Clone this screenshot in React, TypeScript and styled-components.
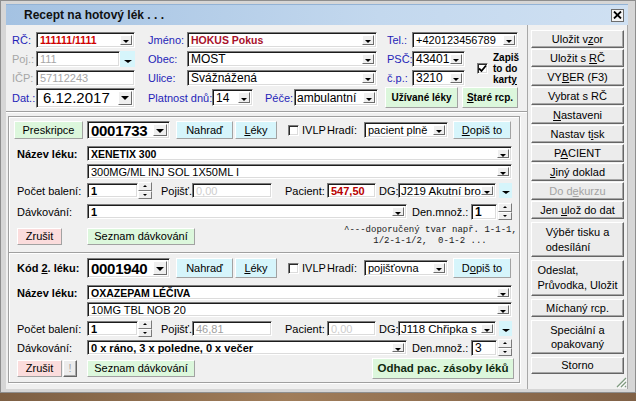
import React from 'react';
import styled, { createGlobalStyle } from 'styled-components';

const GlobalStyle = createGlobalStyle`
  html, body { margin: 0; padding: 0; background: #8b6c4e; }
  body { font-family: "Liberation Sans", Arial, sans-serif; font-size: 11px; color: #000; }
  * { box-sizing: border-box; }
`;

type Tone = 'plain' | 'green' | 'cyan' | 'pink';
type LabelTone = 'blue' | 'gray' | 'black';

const toneBg: Record<Tone, string> = {
  plain: '#ececec',
  green: '#dcf7dc',
  cyan: '#d6f5fb',
  pink: '#fbdcdc',
};

const labelColor: Record<LabelTone, string> = {
  blue: '#1f1fb8',
  gray: '#a6a6a6',
  black: '#000',
};

const Desktop = styled.div`
  width: 636px;
  height: 401px;
  overflow: hidden;
  background: linear-gradient(to right, #7d5f43, #a07d5a 45%, #806146);
`;

const Window = styled.div`
  width: 636px;
  height: 393px;
  display: flex;
  flex-direction: column;
  padding: 3px 7px 3px 5px;
  background: #d6d6d6;
  border: 1px solid #8e8e8e;
`;

const TitleBar = styled.div`
  height: 21px;
  flex: none;
  display: flex;
  align-items: center;
  padding: 0 4px 0 18px;
  background: linear-gradient(to right, #a4c2e2, #c3d8ee 60%, #cfe0f2);
  border-top: 1px solid #93b3d6;
`;

const Title = styled.span`
  flex: 1;
  font-size: 12px;
  font-weight: bold;
  color: #111;
`;

const CloseBox = styled.span`
  width: 13px;
  height: 13px;
  display: flex;
  align-items: center;
  justify-content: center;
  background: #f4f4f4;
  border: 1px solid #6d6d6d;
`;

const Client = styled.div`
  flex: 1;
  display: flex;
  background: #f0f0f0;
`;

const LeftPane = styled.div`
  width: 521px;
  display: flex;
  flex-direction: column;
`;

const RightPane = styled.div`
  width: 101px;
  display: flex;
  flex-direction: column;
  padding: 5px 3px 0;
  border-left: 1px solid #a8a8a8;
  border-right: 1px solid #a8a8a8;
`;

const BtnStack = styled.div<{ $gap: number; $mt?: number }>`
  display: flex;
  flex-direction: column;
  gap: ${p => p.$gap}px;
  margin-top: ${p => p.$mt ?? 0}px;
`;

const Header = styled.div`
  padding: 7px 0 0 6px;
`;

const HeaderGrid = styled.div`
  display: grid;
  grid-template-columns: 24px 99px 52px 190px 35px 53px 53px;
  grid-template-rows: 16px 16px 16px;
  row-gap: 3px;
  align-items: center;
`;

const HeaderRow = styled.div`
  display: flex;
  align-items: center;
  height: 21px;
  margin-top: 1px;
`;

const HeadField = styled.div`
  display: flex;
  align-items: center;
`;

const Rule = styled.div<{ $mt: number; $bleed?: number }>`
  height: 2px;
  flex: none;
  margin: ${p => p.$mt}px -${p => p.$bleed ?? 0}px 0;
  border-top: 1px solid #a0a0a0;
  border-bottom: 1px solid #fff;
`;

const DrugFrame = styled.div`
  width: 512px;
  height: 267px;
  margin: 3px 0 0 2px;
  padding: 4px 5px 0;
  border: 1px solid #a0a0a0;
  box-shadow: inset 1px 1px 0 #fff, 1px 1px 0 #fff;
  display: flex;
  flex-direction: column;
`;

const Row = styled.div<{ $mt: number; $h: number }>`
  display: flex;
  align-items: center;
  flex: none;
  height: ${p => p.$h}px;
  margin-top: ${p => p.$mt}px;
`;

const Label = styled.span<{ $w?: number; $pl?: number; $tone?: LabelTone; $bold?: boolean }>`
  flex: none;
  width: ${p => (p.$w ? `${p.$w}px` : 'auto')};
  padding-left: ${p => p.$pl ?? 0}px;
  color: ${p => labelColor[p.$tone ?? 'black']};
  font-weight: ${p => (p.$bold ? 'bold' : 'normal')};
  white-space: nowrap;
`;

const HeadCell = styled.div`
  width: 73px;
  flex: none;
  display: flex;
  align-items: center;
  align-self: stretch;
`;

const Field = styled.div<{ $w?: number; $h?: number; $ml?: number; $span?: number }>`
  flex: none;
  width: ${p => (p.$w ? `${p.$w}px` : '100%')};
  height: ${p => p.$h ?? 16}px;
  margin-left: ${p => p.$ml ?? 0}px;
  grid-column: span ${p => p.$span ?? 1};
  display: flex;
  align-items: center;
  overflow: hidden;
  background: #fff;
  border-style: solid;
  border-width: 1px;
  border-color: #7c7c7c #fff #fff #7c7c7c;
  box-shadow: inset 1px 1px 0 #1c1c1c, inset -1px -1px 0 #dcdcdc;
`;

const FieldText = styled.span<{ $fs?: number; $bold?: boolean; $color?: string; $pl?: number }>`
  flex: 1;
  padding-left: ${p => p.$pl ?? 3}px;
  white-space: nowrap;
  overflow: hidden;
  font-size: ${p => p.$fs ?? 11}px;
  font-weight: ${p => (p.$bold ? 'bold' : 'normal')};
  color: ${p => p.$color ?? '#000'};
`;

const DropBtn = styled.span<{ $big?: boolean }>`
  flex: none;
  width: ${p => (p.$big ? 14 : 12)}px;
  align-self: stretch;
  margin: 2px 2px 2px 0;
  display: flex;
  align-items: center;
  justify-content: center;
  background: #efefef;
  border: 1px solid;
  border-color: #fff #6c6c6c #6c6c6c #fff;
  &::after {
    content: '';
    margin-top: ${p => (p.$big ? 1 : 3)}px;
    border-left: ${p => (p.$big ? 4 : 3)}px solid transparent;
    border-right: ${p => (p.$big ? 4 : 3)}px solid transparent;
    border-top: ${p => (p.$big ? 4 : 3)}px solid #000;
  }
`;

const CyanArrow = styled.span<{ $w: number; $h: number; $ml?: number }>`
  flex: none;
  width: ${p => p.$w}px;
  height: ${p => p.$h}px;
  margin-left: ${p => p.$ml ?? 0}px;
  display: flex;
  align-items: center;
  justify-content: center;
  background: #d6f5fb;
  &::after {
    content: '';
    margin-top: 4px;
    border-left: 4px solid transparent;
    border-right: 4px solid transparent;
    border-top: 3px solid #000;
  }
`;

const Spin = styled.div<{ $ml?: number }>`
  flex: none;
  width: 14px;
  height: 17px;
  margin-left: ${p => p.$ml ?? 0}px;
  display: flex;
  flex-direction: column;
`;

const SpinBtn = styled.span<{ $up?: boolean }>`
  flex: 1;
  display: flex;
  align-items: center;
  justify-content: center;
  background: #efefef;
  border: 1px solid;
  border-color: #fff #7a7a7a #7a7a7a #fff;
  &::after {
    content: '';
    border-left: 2px solid transparent;
    border-right: 2px solid transparent;
    ${p => (p.$up ? 'border-bottom: 2px solid #000;' : 'border-top: 2px solid #000;')}
  }
`;

const CheckBox = styled.span<{ $ml?: number }>`
  flex: none;
  width: 11px;
  height: 11px;
  margin-left: ${p => p.$ml ?? 0}px;
  display: flex;
  align-items: center;
  justify-content: center;
  background: #fff;
  border: 1px solid;
  border-color: #7c7c7c #fff #fff #7c7c7c;
  box-shadow: inset 1px 1px 0 #2a2a2a, inset -1px -1px 0 #dcdcdc;
`;

const ZapisCell = styled.div`
  grid-column: 7;
  grid-row: 2 / span 2;
  align-self: stretch;
  display: flex;
  align-items: center;
  padding-left: 12px;
  gap: 5px;
`;

const ZapisText = styled.span`
  font-size: 10px;
  font-weight: bold;
  line-height: 11px;
`;

const Btn = styled.button<{ $w?: number; $h?: number; $tone?: Tone; $ml?: number; $bold?: boolean; $fs?: number; $dim?: boolean; $color?: string }>`
  flex: none;
  width: ${p => (p.$w ? `${p.$w}px` : '100%')};
  height: ${p => (p.$h ? `${p.$h}px` : 'auto')};
  align-self: ${p => (p.$h ? 'center' : 'stretch')};
  margin: 0 0 0 ${p => p.$ml ?? 0}px;
  padding: 0;
  font-family: inherit;
  font-size: ${p => p.$fs ?? 11}px;
  font-weight: ${p => (p.$bold ? 'bold' : 'normal')};
  color: ${p => (p.$dim ? '#a3a3a3' : p.$color ?? '#000')};
  line-height: 13px;
  text-align: center;
  white-space: nowrap;
  background: ${p => toneBg[p.$tone ?? 'plain']};
  border: 1px solid;
  border-color: ${p => (p.$tone && p.$tone !== 'plain' ? '#fff #a2a2a2 #a2a2a2 #fff' : '#fff #656565 #656565 #fff')};
  box-shadow: ${p => (p.$tone && p.$tone !== 'plain' ? 'none' : 'inset -1px -1px 0 #a6a6a6')};
`;

const SideBtn = styled(Btn)<{ $hh: number }>`
  height: ${p => p.$hh}px;
`;

const BtnLines = styled.span<{ $center?: boolean; $lh?: number }>`
  display: inline-block;
  text-align: ${p => (p.$center ? 'center' : 'left')};
  line-height: ${p => p.$lh ?? 15}px;
  white-space: nowrap;
`;

const Hint = styled.div`
  width: 172px;
  margin-left: auto;
  margin-right: -2px;
  font-family: "Liberation Mono", "DejaVu Sans Mono", monospace;
  font-size: 9px;
  line-height: 11px;
  text-align: center;
  white-space: pre;
  color: #1a1a1a;
`;

const Grip = styled.svg`
  margin-top: auto;
  align-self: flex-end;
  margin-right: -3px;
  margin-bottom: 1px;
`;

const Combo: React.FC<{
  w?: number;
  h?: number;
  ml?: number;
  span?: number;
  fs?: number;
  bold?: boolean;
  color?: string;
  pl?: number;
  children: React.ReactNode;
}> = ({ w, h, ml, span, fs, bold, color, pl, children }) => (
  <Field $w={w} $h={h} $ml={ml} $span={span}>
    <FieldText $fs={fs} $bold={bold} $color={color} $pl={pl}>
      {children}
    </FieldText>
    <DropBtn $big={(h ?? 16) >= 18} />
  </Field>
);

const Tick = () => (
  <svg width="9" height="9" viewBox="0 0 9 9">
    <path d="M1 4.5 L3.5 7 L8 1.5" fill="none" stroke="#000" strokeWidth="1.8" />
  </svg>
);

type Drug = {
  first?: boolean;
  code: string;
  payer: string;
  name: string;
  form: string;
  count: string;
  insurer: string;
  insurerColor: string;
  patient: string;
  patientRed?: boolean;
  dg: string;
  dose: string;
  daily: string;
  dailyBold?: boolean;
};

const FAINT = '#cdcdcd';

const DrugSection: React.FC<Drug> = d => {
  const mt = d.first ? [0, 7, 3, 3, 5, 6] : [4, 7, 2, 3, 3, 3];
  const topH = d.first ? 18 : 20;
  return (
    <>
      <Row $mt={mt[0]} $h={topH}>
        <HeadCell>
          {d.first ? (
            <Btn $tone="green" $w={69}>Preskripce</Btn>
          ) : (
            <Label $pl={3} $bold>
              Kód <u>2</u>. léku:
            </Label>
          )}
        </HeadCell>
        <Combo w={83} h={topH} fs={15} bold pl={3}>
          <span style={{ letterSpacing: '-0.3px' }}>{d.code}</span>
        </Combo>
        <Btn $tone="cyan" $w={57} $ml={6}>
          Nahraď
        </Btn>
        <Btn $tone="cyan" $w={42} $ml={2}>
          <u>L</u>éky
        </Btn>
        <CheckBox $ml={11} />
        <Label $w={28} $pl={3}>IVLP</Label>
        <Label $w={37}>Hradí:</Label>
        <Combo w={84} fs={11}>{d.payer}</Combo>
        <Btn $tone="cyan" $w={58} $ml={5}>
          {d.first ? (
            <>
              <u>D</u>opiš to
            </>
          ) : (
            <>
              D<u>o</u>piš to
            </>
          )}
        </Btn>
      </Row>
      <Row $mt={mt[1]} $h={15}>
        <Label $w={73} $pl={3} $bold>
          Název léku:
        </Label>
        <Combo w={425} h={15} fs={10.5} bold>
          {d.name}
        </Combo>
      </Row>
      <Row $mt={mt[2]} $h={15}>
        <Combo w={425} h={15} ml={73} fs={11}>
          {d.form}
        </Combo>
      </Row>
      <Row $mt={mt[3]} $h={17}>
        <Label $w={73} $pl={3}>Počet balení:</Label>
        <Field $w={51} $h={15}>
          <FieldText $bold>{d.count}</FieldText>
        </Field>
        <Spin>
          <SpinBtn $up />
          <SpinBtn />
        </Spin>
        <Label $w={40} $pl={9}>Pojišť.:</Label>
        <Field $w={80} $h={15}>
          <FieldText $color={d.insurerColor}>{d.insurer}</FieldText>
        </Field>
        <Label $w={55} $pl={13}>Pacient:</Label>
        <Field $w={49} $h={15}>
          <FieldText $bold={d.patientRed} $color={d.patientRed ? '#b80000' : FAINT}>
            {d.patient}
          </FieldText>
        </Field>
        <Label $w={22} $pl={3}>DG:</Label>
        <Combo w={98} h={15} fs={11.5} pl={2}>
          {d.dg}
        </Combo>
        <CyanArrow $w={13} $h={15} $ml={3} />
      </Row>
      <Row $mt={mt[4]} $h={15}>
        <Label $w={73} $pl={3}>Dávkování:</Label>
        <Combo w={320} h={15} fs={11} bold>
          {d.dose}
        </Combo>
        <Label $w={64} $pl={5}>Den.množ.:</Label>
        <Field $w={26} $h={16}>
          <FieldText $bold={d.dailyBold} $fs={12}>
            {d.daily}
          </FieldText>
        </Field>
        <Spin $ml={1}>
          <SpinBtn $up />
          <SpinBtn />
        </Spin>
      </Row>
      <Row $mt={mt[5]} $h={d.first ? 22 : 21}>
        <HeadCell>
          <Btn $tone="pink" $w={45} $h={17} $ml={3}>
            Zrušit
          </Btn>
          {!d.first && (
            <Btn $w={14} $h={17} $ml={1} $dim>
              !
            </Btn>
          )}
        </HeadCell>
        <Btn $tone="green" $w={108} $h={17}>
          Seznam dávkování
        </Btn>
        {d.first ? (
          <Hint>{'^---doporučený tvar např. 1-1-1,\n1/2-1-1/2,  0-1-2 ...'}</Hint>
        ) : (
          <Btn $tone="green" $w={142} $ml={177} $bold $fs={11.5} $color="#102a10">
            Odhad pac. zásoby léků
          </Btn>
        )}
      </Row>
    </>
  );
};

const App: React.FC = () => (
  <Desktop>
    <GlobalStyle />
    <Window>
      <TitleBar>
        <Title>Recept na hotový lék . . .</Title>
        <CloseBox>
          <svg width="9" height="8" viewBox="0 0 9 8">
            <path d="M1 0.5 L8 7.5 M8 0.5 L1 7.5" stroke="#000" strokeWidth="1.8" />
          </svg>
        </CloseBox>
      </TitleBar>
      <Client>
        <LeftPane>
          <Header>
            <HeaderGrid>
              <Label $tone="blue">RČ:</Label>
              <Combo fs={10.5} bold color="#d00000">111111/1111</Combo>
              <Label $pl={13} $tone="blue">Jméno:</Label>
              <Combo fs={10.5} bold color="#a8102a">HOKUS Pokus</Combo>
              <Label $pl={10} $tone="blue">Tel.:</Label>
              <Combo span={2} fs={11}>+420123456789</Combo>

              <Label $tone="gray">Poj.:</Label>
              <HeadField>
                <Field $w={84}>
                  <FieldText $fs={11} $color="#a6a6a6">111</FieldText>
                </Field>
                <CyanArrow $w={15} $h={16} />
              </HeadField>
              <Label $pl={13} $tone="blue">Obec:</Label>
              <Combo fs={12}>MOST</Combo>
              <Label $pl={10} $tone="blue">PSČ:</Label>
              <Combo fs={12}>43401</Combo>
              <ZapisCell>
                <CheckBox>
                  <Tick />
                </CheckBox>
                <ZapisText>
                  Zapiš
                  <br />
                  to do
                  <br />
                  kart<u>y</u>
                </ZapisText>
              </ZapisCell>

              <Label $tone="gray">IČP:</Label>
              <Field>
                <FieldText $fs={11} $color="#a6a6a6">57112243</FieldText>
              </Field>
              <Label $pl={13} $tone="blue">Ulice:</Label>
              <Combo fs={12}>Svážnážená</Combo>
              <Label $pl={10} $tone="blue">č.p.:</Label>
              <Combo fs={12}>3210</Combo>
            </HeaderGrid>
            <HeaderRow>
              <Label $w={24} $tone="blue">Dat.:</Label>
              <Combo w={99} h={20} fs={15} pl={6}>6.12.2017</Combo>
              <Label $w={77} $pl={13} $tone="blue">Platnost dnů:</Label>
              <Combo w={41} h={17} fs={12}>14</Combo>
              <Label $w={41} $pl={12} $tone="blue">Péče:</Label>
              <Combo w={84} h={17} fs={12} pl={2}>ambulantní</Combo>
              <Btn $tone="green" $w={73} $h={21} $ml={7} $bold $fs={10}>
                Užívané léky
              </Btn>
              <Btn $tone="green" $w={56} $h={21} $ml={4} $bold $fs={10}>
                <u>S</u>taré rcp.
              </Btn>
            </HeaderRow>
          </Header>
          <Rule $mt={3} />
          <DrugFrame>
            <DrugSection
              first
              code="0001733"
              payer="pacient plně"
              name="XENETIX 300"
              form="300MG/ML INJ SOL 1X50ML I"
              count="1"
              insurer="0,00"
              insurerColor={FAINT}
              patient="547,50"
              patientRed
              dg="J219 Akutní bro"
              dose="1"
              daily="1"
              dailyBold
            />
            <Rule $mt={5} $bleed={5} />
            <DrugSection
              code="0001940"
              payer="pojišťovna"
              name="OXAZEPAM LÉČIVA"
              form="10MG TBL NOB 20"
              count="1"
              insurer="46,81"
              insurerColor="#a0a0a0"
              patient="0,00"
              dg="J118 Chřipka s"
              dose="0 x ráno, 3 x poledne, 0 x večer"
              daily="3"
            />
          </DrugFrame>
        </LeftPane>
        <RightPane>
          <BtnStack $gap={1}>
            <SideBtn $hh={18}>Uložit v<u>z</u>or</SideBtn>
            <SideBtn $hh={18}>Uložit s <u>R</u>Č</SideBtn>
            <SideBtn $hh={18}>VY<u>B</u>ER (F3)</SideBtn>
            <SideBtn $hh={18}>Vybrat s RČ</SideBtn>
            <SideBtn $hh={18}><u>N</u>astaveni</SideBtn>
            <SideBtn $hh={18}>Nastav t<u>i</u>sk</SideBtn>
            <SideBtn $hh={18}>P<u>A</u>CIENT</SideBtn>
            <SideBtn $hh={18}><u>J</u>iný doklad</SideBtn>
            <SideBtn $hh={18} $dim>Do d<u>e</u>kurzu</SideBtn>
            <SideBtn $hh={18}>Jen <u>u</u>lož do dat</SideBtn>
          </BtnStack>
          <BtnStack $gap={3} $mt={3}>
            <SideBtn $hh={35}>
              <BtnLines>Výběr tisku a<br />odesílání</BtnLines>
            </SideBtn>
            <SideBtn $hh={36}>
              <BtnLines>Odeslat,<br />Průvodka, Uložit</BtnLines>
            </SideBtn>
            <SideBtn $hh={18}>Míchaný rcp.</SideBtn>
            <SideBtn $hh={34}>
              <BtnLines $center $lh={14}>Speciální a<br />opakovaný</BtnLines>
            </SideBtn>
            <SideBtn $hh={17}>Storno</SideBtn>
          </BtnStack>
          <Grip width="12" height="12" viewBox="0 0 12 12">
            <path d="M11 2 L2 11 M11 6 L6 11 M11 10 L10 11" stroke="#7f9a7f" strokeWidth="1.2" />
            <path d="M12 3 L3 12 M12 7 L7 12" stroke="#fff" strokeWidth="0.8" />
          </Grip>
        </RightPane>
      </Client>
    </Window>
  </Desktop>
);

export default App;
